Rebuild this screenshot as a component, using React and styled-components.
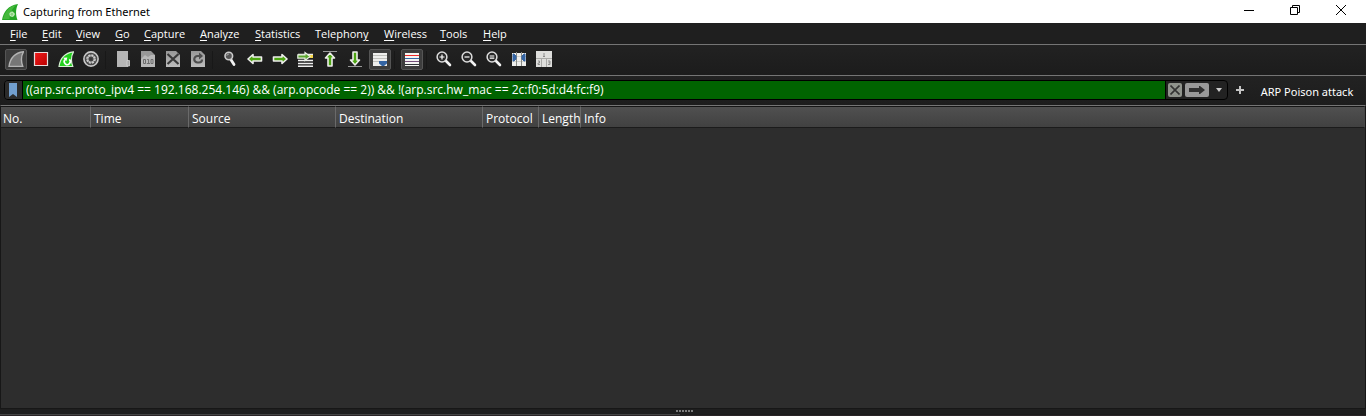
import React from "react";
import styled, { createGlobalStyle, css } from "styled-components";

const Global = createGlobalStyle`
  * { box-sizing: border-box; }
  body { margin: 0; background: #1e1e1e; }
  button, input { font: inherit; color: inherit; border: 0; padding: 0; margin: 0; background: none; }
`;

const Window = styled.div`
  display: flex;
  flex-direction: column;
  min-height: 100vh;
  overflow: hidden;
  font-family: "Open Sans", "Noto Sans", sans-serif;
  font-size: 11px;
  line-height: 16px;
  color: #fff;
  background: #1f1f1f;
`;

const TitleBar = styled.header`
  display: flex;
  align-items: center;
  height: 23px;
  padding: 0 2px;
  background: #fff;
  color: #000;
`;

const Title = styled.h1`
  flex: 1;
  margin: 0 0 0 5px;
  font-family: "Noto Sans", sans-serif;
  font-size: 11px;
  font-weight: 400;
`;

const WindowButton = styled.button`
  display: grid;
  place-items: center;
  width: 46px;
  height: 23px;
  padding-bottom: 3px;
`;

const MenuBar = styled.nav`
  display: flex;
  gap: 14px;
  height: 21px;
  padding: 0 10px;
`;

const MenuItem = styled.button`
  width: ${(p) => p.$width}px;
  text-align: left;
  white-space: nowrap;
  u { text-underline-offset: 2px; }
`;

const ToolBar = styled.div`
  display: flex;
  align-items: flex-start;
  gap: 3px;
  height: 31px;
  padding: 4px 5px;
  border-top: 1px solid #757575;
  background: linear-gradient(#222, #1c1c1c);
`;

const ToolButton = styled.button`
  display: grid;
  place-items: center;
  width: 22px;
  height: 21px;
  padding-bottom: 1px;
  border: 1px solid transparent;
  border-radius: 2px;
  ${(p) => p.$active && css`
    background: #3d3d3d;
    border-color: #555;
  `}
`;

const Separator = styled.span`
  width: 4px;
  height: 18px;
  margin-top: 2px;
  border-left: 1px solid #181818;
`;

const FilterBar = styled.form`
  display: flex;
  align-items: flex-start;
  height: 30px;
  padding: 4px 11px 4px 4px;
  border-top: 1px solid #757575;
  background: linear-gradient(#222, #1d1d1d);
`;

const FilterBox = styled.div`
  display: flex;
  flex: 1;
  height: 20px;
  border: 1px solid #000;
  border-radius: 4px;
  overflow: hidden;
  background: #222;
`;

const BookmarkButton = styled.button`
  display: grid;
  place-items: center;
  width: 18px;
  padding-right: 2px;
  border-right: 1px solid #000;
  background: #2b2b2b;
`;

const FilterInput = styled.input`
  flex: 1;
  min-width: 0;
  padding: 0 3px;
  font-size: 12px;
  background: #006400;
  outline: 0;
`;

const BoxActions = styled.div`
  display: flex;
  align-items: center;
  gap: 3px;
  padding: 0 1px 0 2px;
  border-left: 1px solid #000;
`;

const BoxButton = styled.button`
  display: grid;
  place-items: center;
  width: ${(p) => p.$width}px;
  height: 14px;
  border-radius: 2px;
  background: ${(p) => p.$fill || "none"};
`;

const AddButton = styled.button`
  display: grid;
  place-items: center;
  width: 24px;
  height: 20px;
`;

const SavedFilter = styled.button`
  min-width: 96px;
  height: 20px;
  padding-top: 3px;
  margin-left: 7px;
  font-family: "Noto Sans", sans-serif;
  white-space: nowrap;
`;

const PacketPane = styled.main`
  flex: 1;
  min-height: 120px;
  border: 1px solid #171717;
  border-top: 1px solid #757575;
  background: #2d2d2d;
`;

const PacketTable = styled.table`
  width: 100%;
  table-layout: fixed;
  border-collapse: separate;
  border-spacing: 0;
  font-size: 12px;
`;

const HeadCell = styled.th`
  width: ${(p) => (p.$width ? `${p.$width}px` : "auto")};
  height: 22px;
  padding: 3px 0 0 3px;
  border-top: 1px solid #161616;
  border-bottom: 1px solid #1b1b1b;
  border-right: 1px solid ${(p) => (p.$width ? "#6a6a6a" : "#474747")};
  background: linear-gradient(#505050, #414141);
  font-weight: 400;
  text-align: left;
  white-space: nowrap;
  &:first-child { padding-left: 2px; }
`;

const Splitter = styled.div`
  display: flex;
  justify-content: center;
  gap: 1px;
  height: 5px;
  padding: 1px 0 0 2px;
  background: #1e1e1e;
`;

const Grip = styled.i`
  width: 2px;
  height: 2px;
  background: #7c7c7c;
`;

const LowerPanes = styled.div`
  display: grid;
  grid-template-columns: 1fr 1fr;
  gap: 6px;
  height: 2px;
`;

const LowerPane = styled.section`
  border-top: 1px solid ${(p) => (p.$light ? "#444" : "#1c1c1c")};
  background: #2a2426;
`;

const Svg = ({ w = 16, h = 16, children }) => (
  <svg width={w} height={h} viewBox={`0 0 ${w} ${h}`} fill="none" aria-hidden="true">
    {children}
  </svg>
);

const FIN = "M1 15.5C2 8 6 2 15.5 .8C13 5 12.8 10 14.8 15.5Z";
const LEFT = "M1 8L6 3.5V6H14.5V10H6V12.5Z";
const RIGHT = "M15 8L10 3.5V6H1.5V10H10V12.5Z";
const UP = "M8 2L12.5 7H10V15H6V7H3.5Z";
const DOWN = "M8 14L12.5 9H10V1H6V9H3.5Z";

const Sheet = () => <path d="M1 0H11L15 4V16H1Z" fill="url(#sheet)" />;

const Arrow = ({ d }) => <path d={d} fill="#4da512" stroke="#eeeeec" strokeWidth="1.6" strokeLinejoin="round" />;

const Lens = ({ sign }) => (
  <Svg>
    <path d="M9.5 9.5L14 14" stroke="#f2f2f2" strokeWidth="2.6" strokeLinecap="round" />
    <circle cx="6" cy="6" r="4.9" fill="#292929" stroke="#ddd" strokeWidth="1.5" />
    <path d={sign} stroke="#fff" strokeWidth="1.2" />
  </Svg>
);

const ICONS = {
  start: (
    <Svg><path d={FIN} fill="#777" stroke="#b4b4b4" strokeWidth="1.4" /></Svg>
  ),
  stop: (
    <Svg>
      <defs>
        <linearGradient id="red" x1="0" y1="0" x2="1" y2="1">
          <stop stopColor="#f01c1c" /><stop offset="1" stopColor="#b80000" />
        </linearGradient>
      </defs>
      <path d="M1.5 1.5H14.5V14.5H1.5Z" fill="url(#red)" stroke="#e8dcdc" strokeWidth="1.2" />
    </Svg>
  ),
  restart: (
    <Svg>
      <path d={FIN} fill="#22d01c" stroke="#d5efd2" strokeWidth="1.2" />
      <path d="M11.3 8.4A3 3 0 1 1 7 8.6" stroke="#fff" strokeWidth="1.6" />
      <path d="M5.2 6.8L9.3 6.5L8.4 10.2Z" fill="#fff" />
    </Svg>
  ),
  options: (
    <Svg>
      <circle cx="8" cy="8" r="7.1" fill="#4a4a4a" stroke="#c9c9c9" strokeWidth="1.6" />
      <circle cx="8" cy="8" r="4.1" stroke="#d2d2d2" strokeWidth="1.5" strokeDasharray="2.2 1" />
      <circle cx="8" cy="8" r="3.2" stroke="#c9c9c9" strokeWidth="1" />
      <circle cx="8" cy="8" r="1.6" fill="#383838" />
    </Svg>
  ),
  open: (
    <Svg>
      <defs>
        <linearGradient id="sheet" x1="0" y1="0" x2="0" y2="1">
          <stop stopColor="#979797" /><stop offset="1" stopColor="#bdbdbd" />
        </linearGradient>
      </defs>
      <path d="M2 0H13V16H2Z" fill="#b5b5b5" />
      <path d="M12 9.5H14.5V15H12Z" fill="#a6a6a6" stroke="#d2d2d2" strokeWidth=".8" />
    </Svg>
  ),
  save: (
    <Svg>
      <path d="M1 0H11L15 4V16H1Z" fill="#989898" />
      <path d="M1 8L5 4L8 6L11 4H15V16H1Z" fill="#b8b8b8" />
      <path d="M3.5 8.5H5.5V12.5H3.5ZM7.2 8.5H8.6V12.5M6.8 12.5H10M11 8.5H13V12.5H11Z" stroke="#6c6c6c" strokeWidth="1" />
    </Svg>
  ),
  close: (
    <Svg><Sheet /><path d="M2.5 3L13.5 13M13.5 3L2.5 13" stroke="#393939" strokeWidth="2.2" /></Svg>
  ),
  reload: (
    <Svg>
      <Sheet />
      <path d="M10 5H7.5A3 3 0 0 0 7.5 11.5H9A3 3 0 0 0 12 8.5" stroke="#4d4d4d" strokeWidth="2.2" />
      <path d="M9 1.5L13 5L9 8.5Z" fill="#4d4d4d" />
    </Svg>
  ),
  find: (
    <Svg>
      <path d="M8.5 8L12 13.5" stroke="#f2f2f2" strokeWidth="2.8" strokeLinecap="round" />
      <circle cx="6.8" cy="5" r="3.8" fill="#555" stroke="#ccc" strokeWidth="1.6" />
      <path d="M4.8 4.8A2 2 0 0 1 7 3" stroke="#aaa" />
    </Svg>
  ),
  back: <Svg><Arrow d={LEFT} /></Svg>,
  forward: <Svg><Arrow d={RIGHT} /></Svg>,
  goto: (
    <Svg>
      <path d="M1 3.5H16M1 9.5H16M1 12.5H16M1 15.2H16" stroke="#eee" strokeWidth="1.6" />
      <path d="M12 4H16V7H12Z" fill="#f2d34b" />
      <path d="M13 5.5L8 1.5V3.8H.8V7.2H8V9.5Z" fill="#5aa52d" stroke="#e8eee4" strokeWidth="1.2" />
    </Svg>
  ),
  first: <Svg><path d="M1 .5H15" stroke="#999" /><Arrow d={UP} /></Svg>,
  last: <Svg><path d="M1 15.5H15" stroke="#999" /><Arrow d={DOWN} /></Svg>,
  autoscroll: (
    <Svg>
      <path d="M1 2H15V15H1Z" fill="#eeeeec" />
      <path d="M1 4.5H15M1 7.5H15M1 10.5H15" stroke="#bfc0bb" />
      <path d="M7 10H15V12.5L12 15H10L7 12.5Z" fill="#3465a4" />
    </Svg>
  ),
  colorize: (
    <Svg>
      <path d="M1 2H15V15H1Z" fill="#f4f4f2" />
      <path d="M1 4.5H15" stroke="#ef2929" />
      <path d="M1 7.5H15" stroke="#3465a4" />
      <path d="M1 10.5H15" stroke="#75507b" />
      <path d="M1 13.5H15" stroke="#2e3436" />
    </Svg>
  ),
  zoomIn: <Lens sign="M3.5 6H8.5M6 3.5V8.5" />,
  zoomOut: <Lens sign="M3.5 6H8.5" />,
  zoomReset: <Lens sign="M3.7 5H8.3M3.7 7.2H8.3" />,
  resize: (
    <Svg>
      <path d="M1 2H15V15H1Z" fill="#eeeeec" />
      <path d="M1 5.5H15M1 10.5H15" stroke="#cfcfca" />
      <path d="M5.5 1V15M10.5 1V15" stroke="#888a85" />
      <path d="M2 3H3L5 5V8L3 10H2ZM14 3H13L11 5V8L13 10H14Z" fill="#3465a4" stroke="#3465a4" />
    </Svg>
  ),
  layout: (
    <Svg>
      <path d="M0 0H16V16H0Z" fill="#dededc" />
      <path d="M0 7.5H16M5.5 8V16M10.5 8V16" stroke="#a9a9a7" />
      <path d="M8 2V6M7 5.5H9M2 10H3.5V12H2V13.5H4M12 10H14V13.5H12M12.5 11.8H14" stroke="#858583" strokeWidth=".9" />
    </Svg>
  ),
};

const MENUS = [
  ["", "F", "ile", 18], ["", "E", "dit", 20], ["", "V", "iew", 25], ["", "G", "o", 15],
  ["", "C", "apture", 42], ["", "A", "nalyze", 41], ["", "S", "tatistics", 46],
  ["Telephon", "y", "", 55], ["", "W", "ireless", 42], ["", "T", "ools", 29], ["", "H", "elp", 25],
];

const TOOLS = [
  ["start", "Start capture", true], ["stop", "Stop capture"], ["restart", "Restart capture"], ["options", "Capture options"], null,
  ["open", "Open file"], ["save", "Save file"], ["close", "Close file"], ["reload", "Reload file"], null,
  ["find", "Find packet"], ["back", "Previous packet"], ["forward", "Next packet"], ["goto", "Go to packet"],
  ["first", "First packet"], ["last", "Last packet"], ["autoscroll", "Auto scroll", true], null,
  ["colorize", "Colorize", true], null,
  ["zoomIn", "Zoom in"], ["zoomOut", "Zoom out"], ["zoomReset", "Normal size"], ["resize", "Resize columns"], ["layout", "Reset layout"],
];

const COLUMNS = [["No.", 90], ["Time", 98], ["Source", 147], ["Destination", 147], ["Protocol", 56], ["Length", 42], ["Info"]];

export default function App() {
  return (
    <Window>
      <Global />
      <TitleBar>
        <Svg>
          <path d="M0 16C1.5 8 6 1.5 16 0C13.5 5 13.5 11 15.5 16Z" fill="#24a624" />
          <path d="M1 15C3 7.5 7 2.5 14 1C10 5 8 9 7.5 15Z" fill="#45b83c" />
          <circle cx="10" cy="10.2" r="2.6" fill="#8ad27f" />
          <circle cx="10" cy="10.2" r="2" stroke="#e8f8e5" strokeDasharray="1.3 .7" />
        </Svg>
        <Title>Capturing from Ethernet</Title>
        <WindowButton aria-label="Minimize"><Svg w={10} h={10}><path d="M0 5.5H10" stroke="#000" /></Svg></WindowButton>
        <WindowButton aria-label="Restore">
          <Svg w={10} h={10}><path d="M.5 2.5H7.5V9.5H.5ZM2.5 2.5V.5H9.5V7.5H7.5" stroke="#000" /></Svg>
        </WindowButton>
        <WindowButton aria-label="Close"><Svg w={10} h={10}><path d="M0 0L10 10M10 0L0 10" stroke="#000" /></Svg></WindowButton>
      </TitleBar>

      <MenuBar>
        {MENUS.map(([before, key, after, width]) => (
          <MenuItem key={before + key + after} $width={width}>{before}<u>{key}</u>{after}</MenuItem>
        ))}
      </MenuBar>

      <ToolBar role="toolbar">
        {TOOLS.map((tool, i) => tool
          ? <ToolButton key={i} aria-label={tool[1]} $active={tool[2]}>{ICONS[tool[0]]}</ToolButton>
          : <Separator key={i} />)}
      </ToolBar>

      <FilterBar onSubmit={(e) => e.preventDefault()}>
        <FilterBox>
          <BookmarkButton type="button" aria-label="Filter bookmarks">
            <Svg w={8} h={14}><path d="M0 0H8V14L4 11L0 14Z" fill="#729fcf" /></Svg>
          </BookmarkButton>
          <FilterInput
            aria-label="Display filter"
            spellCheck={false}
            defaultValue="((arp.src.proto_ipv4 == 192.168.254.146) && (arp.opcode == 2)) && !(arp.src.hw_mac == 2c:f0:5d:d4:fc:f9)"
          />
          <BoxActions>
            <BoxButton type="button" aria-label="Clear filter" $width={14} $fill="#8f938c">
              <Svg w={10} h={10}><path d="M.5 .5L9.5 9.5M9.5 .5L.5 9.5" stroke="#333" strokeWidth="1.6" /></Svg>
            </BoxButton>
            <BoxButton aria-label="Apply filter" $width={24} $fill="#999">
              <Svg w={16} h={8}><path d="M0 2H10V0H11L16 4L11 8H10V6H0Z" fill="#303030" /></Svg>
            </BoxButton>
            <BoxButton type="button" aria-label="Recent filters" $width={14}>
              <Svg w={6} h={4}><path d="M0 0H6L3 4Z" fill="#ccc" /></Svg>
            </BoxButton>
          </BoxActions>
        </FilterBox>
        <AddButton type="button" aria-label="Add filter button">
          <Svg w={8} h={8}><path d="M0 4H8M4 0V8" stroke="#c4c4c4" strokeWidth="2" /></Svg>
        </AddButton>
        <SavedFilter type="button">ARP Poison attack</SavedFilter>
      </FilterBar>

      <PacketPane>
        <PacketTable>
          <thead>
            <tr>{COLUMNS.map(([name, width]) => <HeadCell key={name} scope="col" $width={width}>{name}</HeadCell>)}</tr>
          </thead>
        </PacketTable>
      </PacketPane>
      <Splitter role="separator">{[0, 1, 2, 3, 4, 5].map((n) => <Grip key={n} />)}</Splitter>
      <LowerPanes><LowerPane $light /><LowerPane /></LowerPanes>
    </Window>
  );
}
